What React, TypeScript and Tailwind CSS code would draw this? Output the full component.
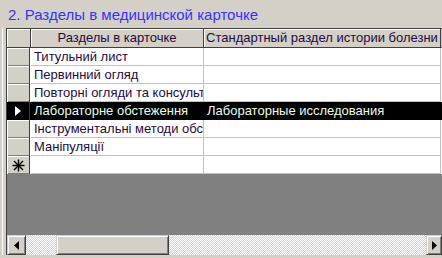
import React from "react";

const rows = [
  { a: "Титульний лист", b: "" },
  { a: "Первинний огляд", b: "" },
  { a: "Повторні огляди та консультації", b: "" },
  { a: "Лабораторне обстеження", b: "Лабораторные исследования", sel: true },
  { a: "Інструментальні методи обстеження", b: "" },
  { a: "Маніпуляції", b: "" },
];

function Selector({ sel, star }: { sel?: boolean; star?: boolean }) {
  return (
    <div
      className={
        "w-[23px] h-full border-r border-r-[#404040] flex items-center justify-center " +
        (sel ? "bg-black" : "bg-[#d4d0c8] shadow-[inset_1px_1px_#ffffff,inset_0_-1px_#808080]")
      }
    >
      {sel && (
        <svg width="8" height="12" viewBox="0 0 8 12">
          <path d="M1 1 L7 6 L1 11 Z" fill="#ffffff" />
        </svg>
      )}
      {star && (
        <svg width="13" height="13" viewBox="0 0 13 13">
          <g stroke="#000" strokeWidth="1.4">
            <line x1="6.5" y1="0.5" x2="6.5" y2="12.5" />
            <line x1="0.5" y1="6.5" x2="12.5" y2="6.5" />
            <line x1="2" y1="2" x2="11" y2="11" />
            <line x1="11" y1="2" x2="2" y2="11" />
          </g>
        </svg>
      )}
    </div>
  );
}

function Arrow({ dir }: { dir: "l" | "r" }) {
  return (
    <svg width="5" height="9" viewBox="0 0 5 9">
      {dir === "l" ? <path d="M5 0 L0 4.5 L5 9 Z" fill="#000" /> : <path d="M0 0 L5 4.5 L0 9 Z" fill="#000" />}
    </svg>
  );
}

const btn =
  "bg-[#d4d0c8] border border-t-[#d4d0c8] border-l-[#d4d0c8] border-r-[#404040] border-b-[#404040] shadow-[inset_1px_1px_#ffffff,inset_-1px_-1px_#808080]";

export default function App() {
  return (
    <div className="w-[442px] h-[258px] bg-[#d4d0c8] overflow-hidden flex flex-col font-['Liberation_Sans',Arial,sans-serif] text-[13px]">
      <div className="h-[28px] pl-[8px] pt-[6px] text-[15px] leading-[18px] text-[#3333ff] whitespace-nowrap">
        2. Разделы в медицинской карточке
      </div>
      <div className="flex">
        <div className="w-[6px] shrink-0 flex">
          <div className="w-[2px]" />
          <div className="w-[1px] bg-white" />
        </div>
        <div className="w-[436px] shrink-0 border-l border-t border-l-[#404040] border-t-[#404040] flex flex-col">
          {/* header */}
          <div className="flex h-[19px] border-b border-b-[#404040] bg-[#d4d0c8] text-[#1f0a40] leading-[18px]">
            <div className="w-[24px] shrink-0 border-r border-r-[#404040] shadow-[inset_1px_1px_#ffffff]" />
            <div className="w-[173px] shrink-0 border-r border-r-[#404040] text-center shadow-[inset_1px_1px_#ffffff] whitespace-nowrap">
              Разделы в карточке
            </div>
            <div className="w-[237px] shrink-0 border-r border-r-[#404040] text-center shadow-[inset_1px_1px_#ffffff] whitespace-nowrap overflow-hidden">
              Стандартный раздел истории болезни
            </div>
          </div>
          {rows.map((r, i) => (
            <div
              key={i}
              className={
                "flex h-[18px] leading-[17px] " +
                (r.sel ? "bg-black text-[#eaffea]" : "bg-white text-[#1f0a40]")
              }
            >
              <div className="w-[24px] shrink-0 h-full">
                <Selector sel={r.sel} />
              </div>
              <div
                className={
                  "w-[173px] shrink-0 pl-[3px] border-r border-b overflow-hidden whitespace-nowrap " +
                  (r.sel ? "border-black" : "border-[#c0c0c0]")
                }
              >
                {r.a}
              </div>
              <div
                className={
                  "w-[237px] shrink-0 pl-[3px] border-r border-b overflow-hidden whitespace-nowrap " +
                  (r.sel ? "border-black" : "border-[#c0c0c0]")
                }
              >
                {r.b}
              </div>
            </div>
          ))}
          <div className="flex h-[18px] bg-white">
            <div className="w-[24px] shrink-0 h-full">
              <Selector star />
            </div>
            <div className="w-[173px] shrink-0 border-r border-b border-[#c0c0c0]" />
            <div className="w-[237px] shrink-0 border-r border-b border-[#c0c0c0]" />
          </div>
          <div className="h-[61px] bg-[#808080]" />
          {/* scrollbar */}
          <div className="flex h-[20px]">
            <div className={"w-[19px] shrink-0 flex items-center justify-center " + btn}>
              <Arrow dir="l" />
            </div>
            <div className="flex-1 flex bg-[image:repeating-conic-gradient(#ffffff_0%_25%,#d4d0c8_0%_50%)] bg-[length:2px_2px]">
              <div className="w-[30px]" />
              <div className={"w-[113px] " + btn} />
              <div className="flex-1" />
            </div>
            <div className={"w-[16px] shrink-0 flex items-center justify-center " + btn}>
              <Arrow dir="r" />
            </div>
          </div>
        </div>
      </div>
    </div>
  );
}
